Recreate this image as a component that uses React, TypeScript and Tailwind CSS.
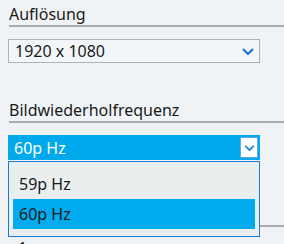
import { useState } from 'react';

const rates = ['59p Hz', '60p Hz'];

const Chevron = ({ className }: { className: string }) => (
  <svg viewBox="0 0 12 7" className={className} fill="none">
    <path d="M1 1l5 5 5-5" stroke="currentColor" strokeWidth="2" />
  </svg>
);

const App = () => {
  const [rate, setRate] = useState('60p Hz');

  return (
    <div
      className="w-[284px] h-[244px] overflow-hidden bg-[#f0f3f6] text-[#1a1a1a] text-[16px]"
      style={{ fontFamily: '"Noto Sans", "Open Sans", sans-serif' }}
    >
      {/* Auflösung */}
      <div className="ml-[9px] mt-[3px] h-[24px] leading-[22px] border-b-2 border-[#a9adb1]">Auflösung</div>
      <div className="ml-[8px] mt-[12px] w-[252px] h-[24px] border border-[#aeb3b7] bg-[#f3f6f8] flex items-center justify-between pl-[6px] pr-[4px]">
        <span>1920 x 1080</span>
        <Chevron className="w-[12px] h-[7px] text-[#1b6fce] mr-[1px]" />
      </div>

      {/* Bildwiederholfrequenz */}
      <div className="ml-[9px] mt-[36px] h-[24px] leading-[22px] border-b-2 border-[#a9adb1]">Bildwiederholfrequenz</div>
      <div className="relative ml-[8px] mt-[12px] w-[252px]">
        <div className="h-[25px] bg-[#00a9ec] text-white flex items-center justify-between pl-[6px] pr-[2px]">
          <span>{rate}</span>
          <div className="w-[18px] h-[21px] bg-white border border-[#5ea8e4] flex items-center justify-center">
            <Chevron className="w-[11px] h-[6px] text-[#2b7fd0]" />
          </div>
        </div>
        <div className="absolute left-0 top-[26px] w-[252px] h-[76px] border border-[#1a7ad6] bg-[#e9eeee] px-[4px] py-[7px] z-10">
          {rates.map((r) => (
            <div
              key={r}
              onClick={() => setRate(r)}
              className={`h-[30px] flex items-center pl-[6px] ${r === rate ? 'bg-[#00aced]' : ''}`}
            >
              {r}
            </div>
          ))}
        </div>
      </div>

      {/* next section, covered by the open list */}
      <div className="ml-[9px] mt-[43px] h-[24px] border-b-2 border-[#a9adb1]" />
      <div className="ml-[18px] mt-[11px] leading-[20px]">1</div>
    </div>
  );
};

export default App;
